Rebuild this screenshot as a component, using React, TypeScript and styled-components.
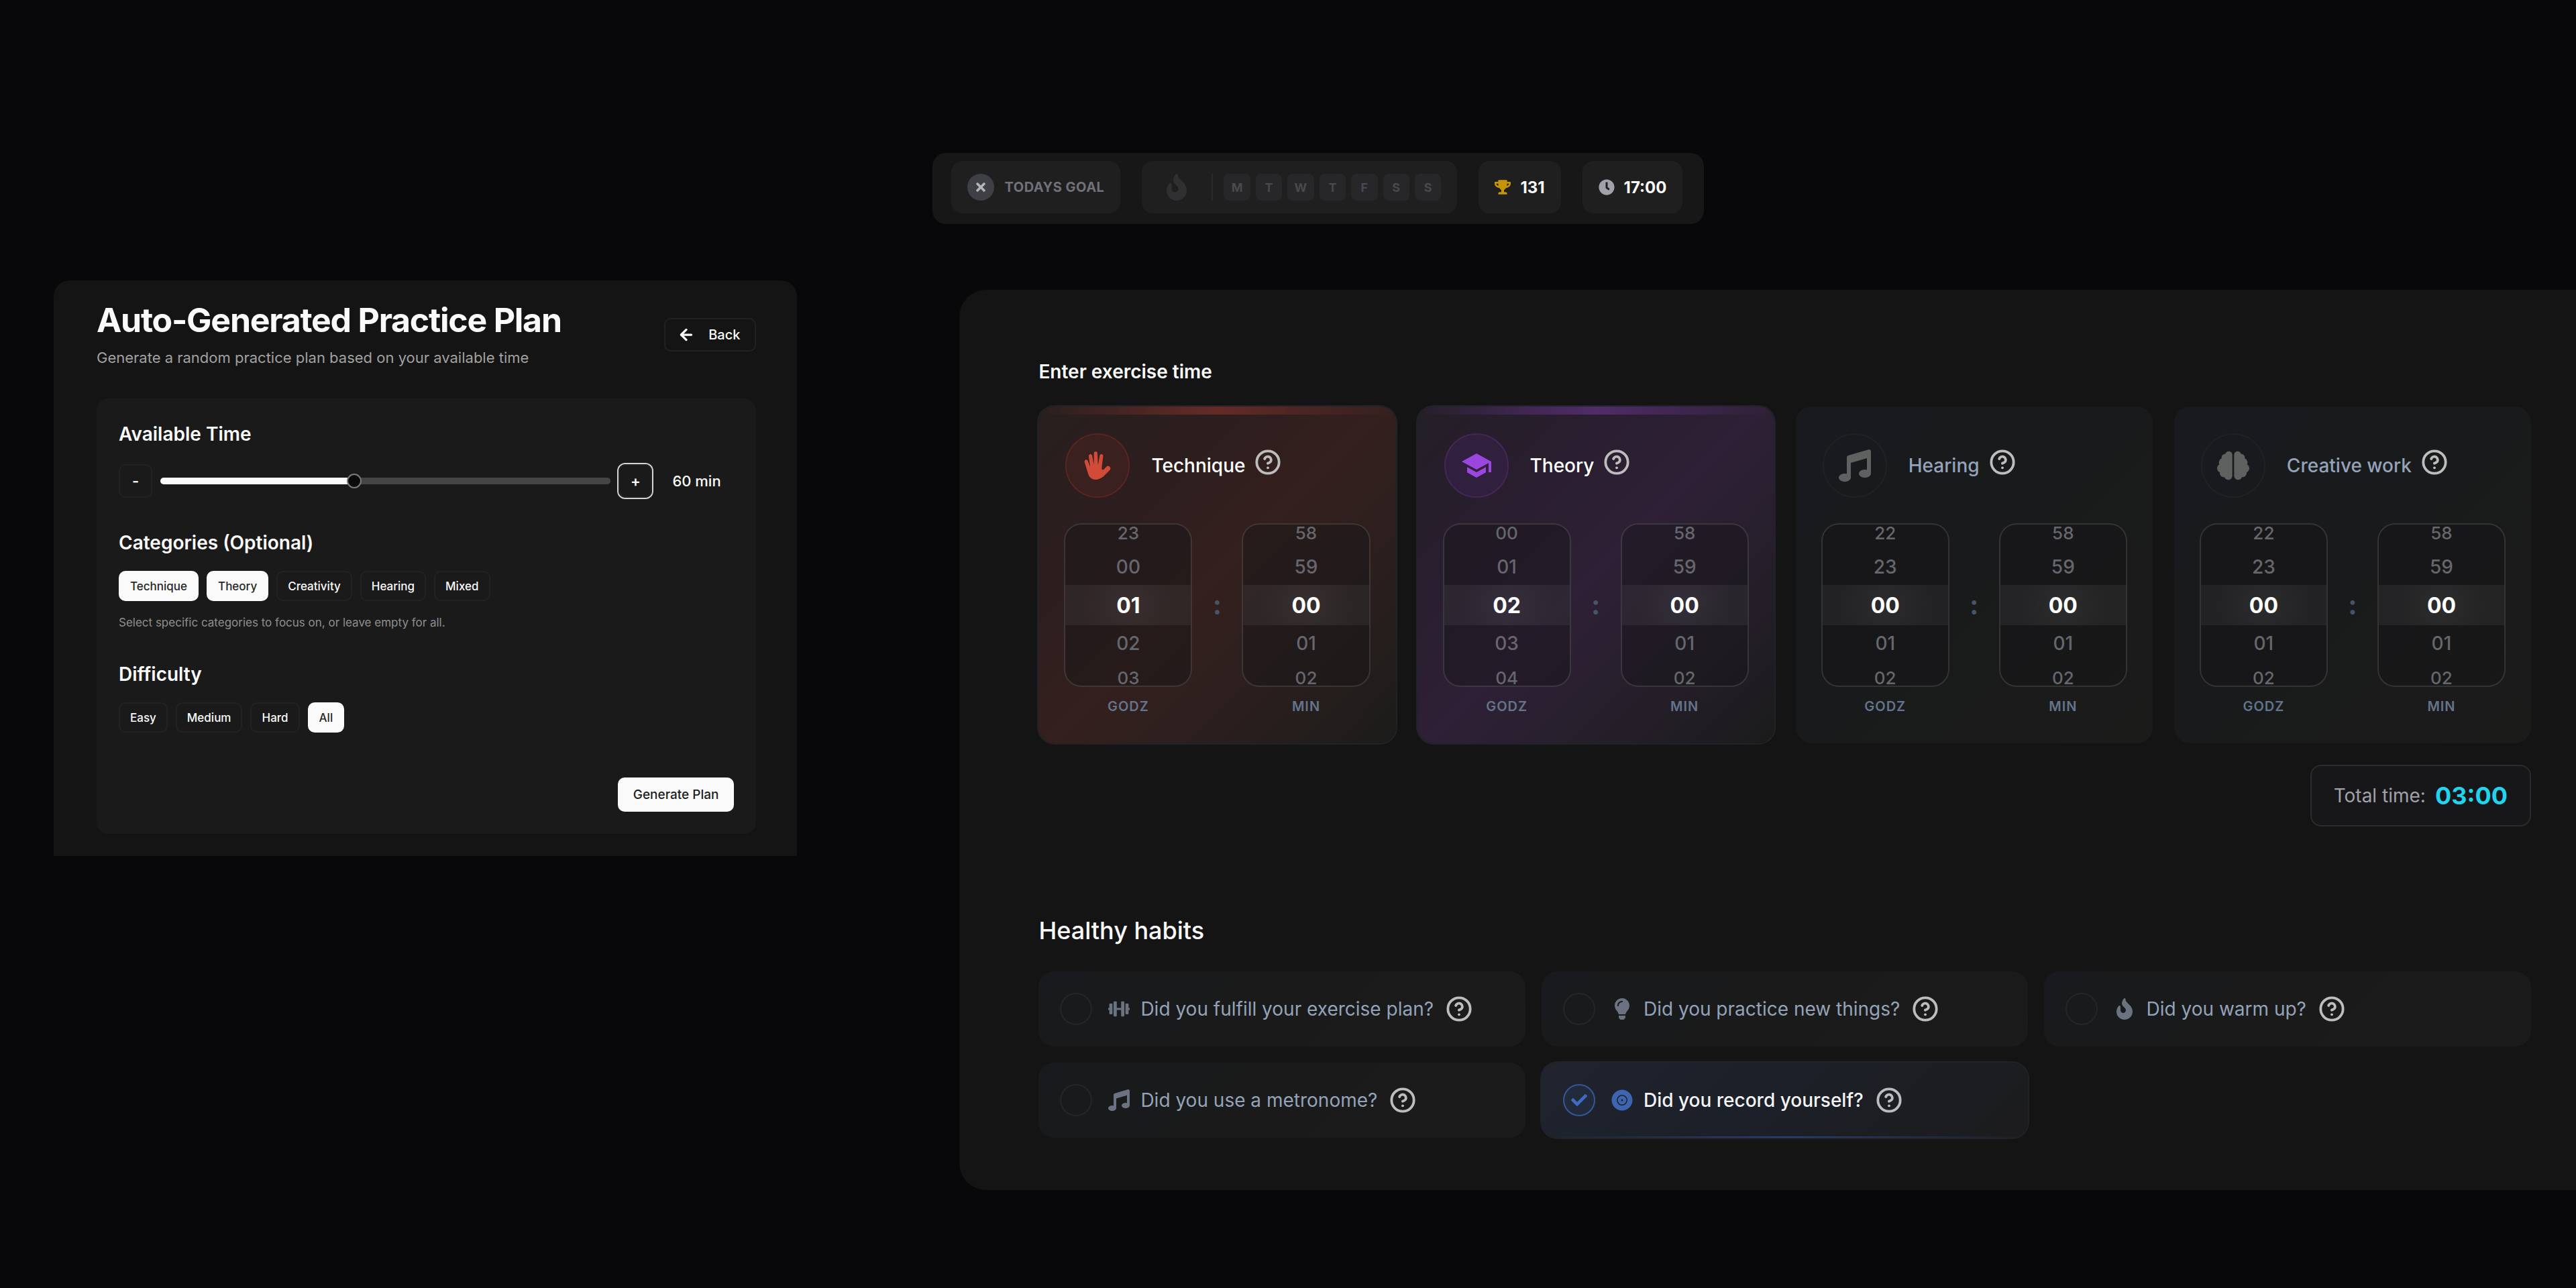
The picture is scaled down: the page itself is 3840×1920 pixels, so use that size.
import React, { useState } from "react";
import styled, { createGlobalStyle, css } from "styled-components";
import { FaBrain, FaCheck, FaClock, FaDumbbell, FaFire, FaLightbulb, FaMusic, FaRecordVinyl, FaTimes, FaTrophy } from "react-icons/fa";
import { IoMdHand } from "react-icons/io";
import { MdSchool } from "react-icons/md";
import { ArrowLeft, HelpCircle } from "lucide-react";

const GlobalStyle = createGlobalStyle`
  *, *::before, *::after { box-sizing: border-box; }
  body {
    margin: 0;
    background: #08080a;
    color: #fafafa;
    font-family: Inter, "Liberation Sans", sans-serif;
  }
  h1, h2, h3, p, ul { margin: 0; padding: 0; font-weight: inherit; }
  ul { list-style: none; }
  button, input { font: inherit; margin: 0; }
  button { cursor: pointer; }
  svg { display: block; flex: none; }
`;

const Page = styled.div`
  min-height: 100vh;
  padding-top: 228px;
  display: flex;
  flex-direction: column;
  gap: 84px;
`;

/* ---------- status bar ---------- */

const StatusRow = styled.header`
  display: flex;
  justify-content: center;
  padding-left: 90px;
`;

const StatusBar = styled.div`
  display: flex;
  gap: 32px;
  padding: 12px 32px 16px 28px;
  border-radius: 20px;
  background: #171717;
`;

const StatusPill = styled.div<{ $gap: number }>`
  display: flex;
  align-items: center;
  gap: ${(p) => p.$gap}px;
  height: 78px;
  padding: 0 24px;
  border-radius: 16px;
  background: #1f1f1f;
`;

const GoalMark = styled.span`
  display: grid;
  place-items: center;
  width: 40px;
  height: 40px;
  border-radius: 50%;
  background: #3f3f46;
  color: #b4b4bb;
  font-size: 20px;
`;

const GoalText = styled.span`
  font-size: 20px;
  font-weight: 700;
  letter-spacing: 0.025em;
  text-transform: uppercase;
  color: #71717a;
`;

const StreakIcon = styled.span`
  padding: 0 16px 0 8px;
  font-size: 40px;
  color: #303033;
`;

const Divider = styled.span`
  width: 2px;
  height: 40px;
  background: #2a2a2c;
`;

const Week = styled.ul`
  display: grid;
  grid-template-columns: repeat(7, 1fr);
  gap: 8px;
  width: 324px;
`;

const Day = styled.li`
  display: grid;
  place-items: center;
  height: 40px;
  border-radius: 8px;
  background: #27272a;
  color: #49494f;
  font-size: 18px;
  font-weight: 700;
`;

const StatIcon = styled.span<{ $color: string }>`
  font-size: 24px;
  color: ${(p) => p.$color};
`;

const StatValue = styled.span`
  font-size: 24px;
  font-weight: 700;
`;

/* ---------- layout ---------- */

const Main = styled.main`
  display: grid;
  grid-template-columns: minmax(0, 46fr) minmax(0, 100fr);
  gap: 242px;
  align-items: start;
  padding-left: 80px;
`;

/* ---------- plan generator ---------- */

const PlanPanel = styled.section`
  padding: 30px 61px 33px 64px;
  border-radius: 24px 24px 0 0;
  background: #141414;
`;

const PlanHeader = styled.div`
  display: flex;
  align-items: center;
  justify-content: space-between;
  margin-bottom: 44px;
`;

const PlanTitle = styled.h1`
  font-size: 50px;
  line-height: 58px;
  font-weight: 700;
  letter-spacing: -0.025em;
`;

const PlanSubtitle = styled.p`
  margin-top: 10px;
  font-size: 22px;
  line-height: 34px;
  color: #a1a1a1;
`;

const buttonBase = css`
  display: inline-flex;
  align-items: center;
  justify-content: center;
  border: 2px solid #222222;
  border-radius: 10px;
  background: transparent;
  color: #fafafa;
  font-weight: 500;
`;

const BackButton = styled.button`
  ${buttonBase}
  gap: 20px;
  height: 50px;
  padding: 0 22px 0 18px;
  font-size: 20px;
`;

const PlanCard = styled.div`
  display: flex;
  flex-direction: column;
  gap: 44px;
  padding: 33px;
  border-radius: 18px;
  background: #1a1a1a;
`;

const FieldTitle = styled.h2`
  display: block;
  margin-bottom: 22px;
  font-size: 28px;
  line-height: 40px;
  font-weight: 600;
`;

const RangeRow = styled.div`
  display: flex;
  align-items: center;
  gap: 12px;
  height: 56px;
`;

const StepButton = styled.button<{ $focused?: boolean }>`
  ${buttonBase}
  flex: none;
  width: 50px;
  height: 50px;
  padding: 0;
  font-size: 22px;
  font-weight: 600;
  box-shadow: ${(p) => (p.$focused ? "0 0 0 2px #d4d4d4" : "none")};
`;

const Slider = styled.input`
  --fill: calc(11px + var(--ratio) * (100% - 22px));
  appearance: none;
  flex: 1;
  min-width: 0;
  height: 22px;
  background: transparent;

  &::-webkit-slider-runnable-track {
    height: 10px;
    border-radius: 5px;
    background: linear-gradient(to right, #fafafa var(--fill), #454545 var(--fill));
  }
  &::-webkit-slider-thumb {
    appearance: none;
    width: 22px;
    height: 22px;
    margin-top: -6px;
    border: 2px solid #7a7a7a;
    border-radius: 50%;
    background: #0a0a0a;
  }
`;

const RangeValue = styled.output`
  width: 92px;
  margin-left: 18px;
  font-size: 22px;
  font-weight: 500;
`;

const ChipRow = styled.div`
  display: flex;
  flex-wrap: wrap;
  gap: 12px;
`;

const Chip = styled.button<{ $on?: boolean }>`
  ${buttonBase}
  height: 45px;
  padding: 0 15px;
  font-size: 17px;
  ${(p) => p.$on && "background: #fafafa; border-color: #fafafa; color: #262626;"}
`;

const Hint = styled.p`
  margin-top: 20px;
  font-size: 17px;
  line-height: 25px;
  color: #8f8f8f;
`;

const PlanFooter = styled.div`
  display: flex;
  justify-content: flex-end;
  padding-top: 23px;
`;

const GenerateButton = styled.button`
  ${buttonBase}
  height: 51px;
  padding: 0 21px;
  border-color: #fafafa;
  background: #fafafa;
  color: #1c1c1c;
  font-size: 19px;
`;

/* ---------- session report ---------- */

const ReportPanel = styled.section`
  margin-top: 14px;
  padding: 102px 67px 78px 118px;
  border-radius: 40px 0 0 40px;
  background: #141414;
`;

const ReportTitle = styled.h2`
  margin-bottom: 32px;
  font-size: 28px;
  line-height: 40px;
  font-weight: 600;
`;

const TimerGrid = styled.div`
  display: grid;
  grid-template-columns: repeat(4, minmax(0, 1fr));
  gap: 32px;
`;

type Tone = { surface: string; bar: string; ring: string; disc: string; icon: string };

const tones: Record<string, Tone> = {
  red: {
    surface: "linear-gradient(135deg, #281f1e 0%, #2d1e1e 28%, #34201e 50%, #2b1f1e 72%, #1b1c1a 100%)",
    bar: "#652b27",
    ring: "#572622",
    disc: "#3a201e",
    icon: "#d24b38",
  },
  violet: {
    surface: "linear-gradient(135deg, #241f27 0%, #291e2f 28%, #2e2036 50%, #261f2b 72%, #1b1b1b 100%)",
    bar: "#502c69",
    ring: "#452658",
    disc: "#30203d",
    icon: "#9b47dd",
  },
  idle: {
    surface: "linear-gradient(135deg, #181a1e 0%, #191a1b 45%, #1b1b1a 100%)",
    bar: "transparent",
    ring: "#202123",
    disc: "transparent",
    icon: "#5f6060",
  },
};

const TimerCard = styled.article<{ $tone: Tone; $active: boolean }>`
  overflow: hidden;
  border-radius: 24px;
  background: ${(p) => p.$tone.surface};
  box-shadow: ${(p) => (p.$active ? "0 0 0 2px #202327" : "none")};

  &::before {
    content: "";
    display: block;
    height: 12px;
    background: linear-gradient(to right, transparent, ${(p) => p.$tone.bar}, transparent);
  }
`;

const TimerHeader = styled.div`
  display: flex;
  align-items: center;
  padding: 28px 40px 38px;
`;

const TimerIcon = styled.span<{ $tone: Tone }>`
  display: grid;
  place-items: center;
  flex: none;
  width: 96px;
  height: 96px;
  margin-right: 32px;
  border: 2px solid ${(p) => p.$tone.ring};
  border-radius: 50%;
  background: ${(p) => p.$tone.disc};
  color: ${(p) => p.$tone.icon};
  font-size: 48px;
`;

const TimerName = styled.h3<{ $active: boolean }>`
  font-size: 28px;
  line-height: 40px;
  font-weight: 500;
  color: ${(p) => (p.$active ? "#ffffff" : "#94a3b8")};
`;

const HelpButton = styled.button<{ $raised?: boolean }>`
  padding: 0;
  margin-left: ${(p) => (p.$raised ? 14 : 18)}px;
  margin-bottom: ${(p) => (p.$raised ? 10 : 0)}px;
  border: 0;
  background: none;
  color: #bdbdbd;
`;

const Wheels = styled.div`
  display: grid;
  grid-template-columns: 1fr 74px 1fr;
  padding: 0 38px 40px;
`;

const Colon = styled.span`
  align-self: center;
  justify-self: center;
  margin-bottom: 44px;
  font-size: 40px;
  line-height: 44px;
  font-weight: 700;
  color: #475569;
`;

const WheelColumn = styled.div`
  display: flex;
  flex-direction: column;
  align-items: stretch;
`;

const WheelBox = styled.ul`
  display: flex;
  flex-direction: column;
  justify-content: center;
  height: 244px;
  overflow: hidden;
  border: 2px solid rgba(255, 255, 255, 0.12);
  border-radius: 26px;
  background: rgba(20, 20, 22, 0.4);
`;

const wheelRows = [48, 54, 60, 54, 48];
const wheelFonts = [26, 28, 32, 28, 26];

const WheelItem = styled.li<{ $slot: number }>`
  flex: none;
  height: ${(p) => wheelRows[p.$slot]}px;
  font-size: ${(p) => wheelFonts[p.$slot]}px;
  font-weight: ${(p) => (p.$slot === 2 ? 700 : 500)};
  color: ${(p) => (p.$slot === 2 ? "#ffffff" : "#66666d")};
  background: ${(p) =>
    p.$slot === 2
      ? "radial-gradient(circle at center, rgba(255,255,255,0.09), rgba(255,255,255,0.05) 70%)"
      : "none"};
`;

const WheelButton = styled.button`
  display: grid;
  place-items: center;
  width: 100%;
  height: 100%;
  padding: 0;
  border: 0;
  background: none;
  color: inherit;
`;

const WheelLabel = styled.span`
  margin-top: 14px;
  font-size: 20px;
  line-height: 30px;
  font-weight: 600;
  letter-spacing: 0.05em;
  text-align: center;
  color: #64748b;
`;

const TotalRow = styled.div`
  display: flex;
  justify-content: flex-end;
  margin-top: 32px;
`;

const TotalBox = styled.p`
  display: flex;
  align-items: center;
  gap: 14px;
  height: 92px;
  padding: 0 33px;
  border: 2px solid #2b2b2e;
  border-radius: 16px;
  background: #17171a;
  font-size: 28px;
  color: #a1a1aa;
`;

const TotalValue = styled.strong`
  font-size: 36px;
  font-weight: 700;
  color: #22d3ee;
`;

const HabitsTitle = styled.h2`
  margin: 130px 0 36px;
  font-size: 36px;
  line-height: 50px;
  font-weight: 500;
`;

const HabitGrid = styled.div`
  display: grid;
  grid-template-columns: repeat(3, minmax(0, 1fr));
  gap: 24px;
`;

const HabitCard = styled.div<{ $on: boolean }>`
  position: relative;
  display: flex;
  align-items: center;
  height: 112px;
  padding: 0 32px;
  border-radius: 24px;
  overflow: hidden;
  background: linear-gradient(135deg, #181a1d 0%, #1a1a1a 50%, #1b1b1b 100%);
  ${(p) =>
    p.$on &&
    css`
      background: linear-gradient(135deg, #1f242f 0%, #1c2029 40%, #1c1c1d 100%);
      box-shadow: 0 0 0 2px #1f242b;

      &::after {
        content: "";
        position: absolute;
        inset: auto 0 0 0;
        height: 2px;
        background: linear-gradient(to right, transparent, #2b4475, transparent);
      }
    `}
`;

const HabitLabel = styled.label<{ $on: boolean }>`
  display: flex;
  align-items: center;
  font-size: 28px;
  line-height: 40px;
  font-weight: ${(p) => (p.$on ? 500 : 400)};
  color: ${(p) => (p.$on ? "#f4f4f5" : "#94a3b8")};
  cursor: pointer;
`;

const TickBox = styled.span`
  display: grid;
  place-items: center;
  margin-right: 24px;

  & > * { grid-area: 1 / 1; }
  & > svg { font-size: 24px; color: #3e6cc4; pointer-events: none; }
`;

const Tick = styled.input`
  appearance: none;
  width: 48px;
  height: 48px;
  border: 2px solid #23262b;
  border-radius: 50%;

  &:checked {
    border-color: #355796;
    background: #222b3c;
  }
`;

const HabitIcon = styled.span<{ $on: boolean }>`
  display: grid;
  place-items: center;
  width: 32px;
  margin-right: 16px;
  font-size: 32px;
  color: ${(p) => (p.$on ? "#3d65b0" : "#6b7280")};
`;

const pad = (n: number) => String(n).padStart(2, "0");

type WheelProps = { label: string; value: number; size: number; onChange: (v: number) => void };

function Wheel({ label, value, size, onChange }: WheelProps) {
  return (
    <WheelColumn>
      <WheelBox aria-label={label}>
        {[-2, -1, 0, 1, 2].map((step, slot) => {
          const n = (value + step + size) % size;
          return (
            <WheelItem key={step} $slot={slot}>
              <WheelButton type="button" onClick={() => onChange(n)}>{pad(n)}</WheelButton>
            </WheelItem>
          );
        })}
      </WheelBox>
      <WheelLabel>{label}</WheelLabel>
    </WheelColumn>
  );
}

const subjects = [
  { name: "Technique", tone: "red", icon: <IoMdHand /> },
  { name: "Theory", tone: "violet", icon: <MdSchool /> },
  { name: "Hearing", tone: "idle", icon: <FaMusic /> },
  { name: "Creative work", tone: "idle", icon: <FaBrain /> },
];

const habitList = [
  { text: "Did you fulfill your exercise plan?", icon: <FaDumbbell /> },
  { text: "Did you practice new things?", icon: <FaLightbulb /> },
  { text: "Did you warm up?", icon: <FaFire /> },
  { text: "Did you use a metronome?", icon: <FaMusic /> },
  { text: "Did you record yourself?", icon: <FaRecordVinyl /> },
];

const categoryList = ["Technique", "Theory", "Creativity", "Hearing", "Mixed"];
const levels = ["Easy", "Medium", "Hard", "All"];
const MIN = 15;
const MAX = 120;

function PlanGenerator() {
  const [minutes, setMinutes] = useState(60);
  const [chosen, setChosen] = useState(["Technique", "Theory"]);
  const [level, setLevel] = useState("All");
  const move = (by: number) => setMinutes((m) => Math.min(MAX, Math.max(MIN, m + by)));
  const toggle = (c: string) =>
    setChosen((list) => (list.includes(c) ? list.filter((x) => x !== c) : [...list, c]));

  return (
    <PlanPanel>
      <PlanHeader>
        <div>
          <PlanTitle>Auto-Generated Practice Plan</PlanTitle>
          <PlanSubtitle>Generate a random practice plan based on your available time</PlanSubtitle>
        </div>
        <BackButton type="button"><ArrowLeft size={26} strokeWidth={3} />Back</BackButton>
      </PlanHeader>
      <PlanCard>
        <div>
          <FieldTitle as="label" htmlFor="minutes">Available Time</FieldTitle>
          <RangeRow>
            <StepButton type="button" onClick={() => move(-15)}>-</StepButton>
            <Slider
              id="minutes"
              type="range"
              min={MIN}
              max={MAX}
              step={15}
              value={minutes}
              onChange={(e) => setMinutes(Number(e.target.value))}
              style={{ "--ratio": (minutes - MIN) / (MAX - MIN) } as React.CSSProperties}
            />
            <StepButton type="button" $focused onClick={() => move(15)}>+</StepButton>
            <RangeValue htmlFor="minutes">{minutes} min</RangeValue>
          </RangeRow>
        </div>
        <div>
          <FieldTitle>Categories (Optional)</FieldTitle>
          <ChipRow>
            {categoryList.map((c) => (
              <Chip key={c} type="button" $on={chosen.includes(c)} onClick={() => toggle(c)}>{c}</Chip>
            ))}
          </ChipRow>
          <Hint>Select specific categories to focus on, or leave empty for all.</Hint>
        </div>
        <div>
          <FieldTitle>Difficulty</FieldTitle>
          <ChipRow>
            {levels.map((l) => (
              <Chip key={l} type="button" $on={l === level} onClick={() => setLevel(l)}>{l}</Chip>
            ))}
          </ChipRow>
        </div>
        <PlanFooter>
          <GenerateButton type="button">Generate Plan</GenerateButton>
        </PlanFooter>
      </PlanCard>
    </PlanPanel>
  );
}

function SessionReport() {
  const [times, setTimes] = useState([[1, 0], [2, 0], [0, 0], [0, 0]]);
  const [done, setDone] = useState([false, false, false, false, true]);
  const total = times.reduce((sum, [h, m]) => sum + h * 60 + m, 0);
  const setTime = (row: number, part: number, v: number) =>
    setTimes((all) => all.map((t, i) => (i === row ? t.map((x, j) => (j === part ? v : x)) : t)));

  return (
    <ReportPanel>
      <ReportTitle>Enter exercise time</ReportTitle>
      <TimerGrid>
        {subjects.map((s, i) => {
          const active = s.tone !== "idle";
          const tone = tones[s.tone];
          return (
            <TimerCard key={s.name} $tone={tone} $active={active}>
              <TimerHeader>
                <TimerIcon $tone={tone}>{s.icon}</TimerIcon>
                <TimerName $active={active}>{s.name}</TimerName>
                <HelpButton type="button" $raised aria-label={`About ${s.name}`}>
                  <HelpCircle size={40} strokeWidth={2.3} />
                </HelpButton>
              </TimerHeader>
              <Wheels>
                <Wheel label="GODZ" value={times[i][0]} size={24} onChange={(v) => setTime(i, 0, v)} />
                <Colon>:</Colon>
                <Wheel label="MIN" value={times[i][1]} size={60} onChange={(v) => setTime(i, 1, v)} />
              </Wheels>
            </TimerCard>
          );
        })}
      </TimerGrid>
      <TotalRow>
        <TotalBox>
          Total time:
          <TotalValue>{pad(Math.floor(total / 60))}:{pad(total % 60)}</TotalValue>
        </TotalBox>
      </TotalRow>
      <HabitsTitle>Healthy habits</HabitsTitle>
      <HabitGrid>
        {habitList.map((h, i) => (
          <HabitCard key={h.text} $on={done[i]}>
            <HabitLabel $on={done[i]}>
              <TickBox>
                <Tick
                  type="checkbox"
                  checked={done[i]}
                  onChange={() => setDone((d) => d.map((x, j) => (j === i ? !x : x)))}
                />
                {done[i] && <FaCheck />}
              </TickBox>
              <HabitIcon $on={done[i]}>{h.icon}</HabitIcon>
              {h.text}
            </HabitLabel>
            <HelpButton type="button" aria-label={`About: ${h.text}`}>
              <HelpCircle size={40} strokeWidth={2.3} />
            </HelpButton>
          </HabitCard>
        ))}
      </HabitGrid>
    </ReportPanel>
  );
}

export default function App() {
  return (
    <>
      <GlobalStyle />
      <Page>
        <StatusRow>
          <StatusBar>
            <StatusPill $gap={16}>
              <GoalMark><FaTimes /></GoalMark>
              <GoalText>Todays goal</GoalText>
            </StatusPill>
            <StatusPill $gap={16}>
              <StreakIcon><FaFire /></StreakIcon>
              <Divider />
              <Week>
                {["M", "T", "W", "T", "F", "S", "S"].map((d, i) => <Day key={i}>{d}</Day>)}
              </Week>
            </StatusPill>
            <StatusPill $gap={14}>
              <StatIcon $color="#c4940a"><FaTrophy /></StatIcon>
              <StatValue>131</StatValue>
            </StatusPill>
            <StatusPill $gap={14}>
              <StatIcon $color="#a1a1aa"><FaClock /></StatIcon>
              <StatValue>17:00</StatValue>
            </StatusPill>
          </StatusBar>
        </StatusRow>
        <Main>
          <PlanGenerator />
          <SessionReport />
        </Main>
      </Page>
    </>
  );
}
